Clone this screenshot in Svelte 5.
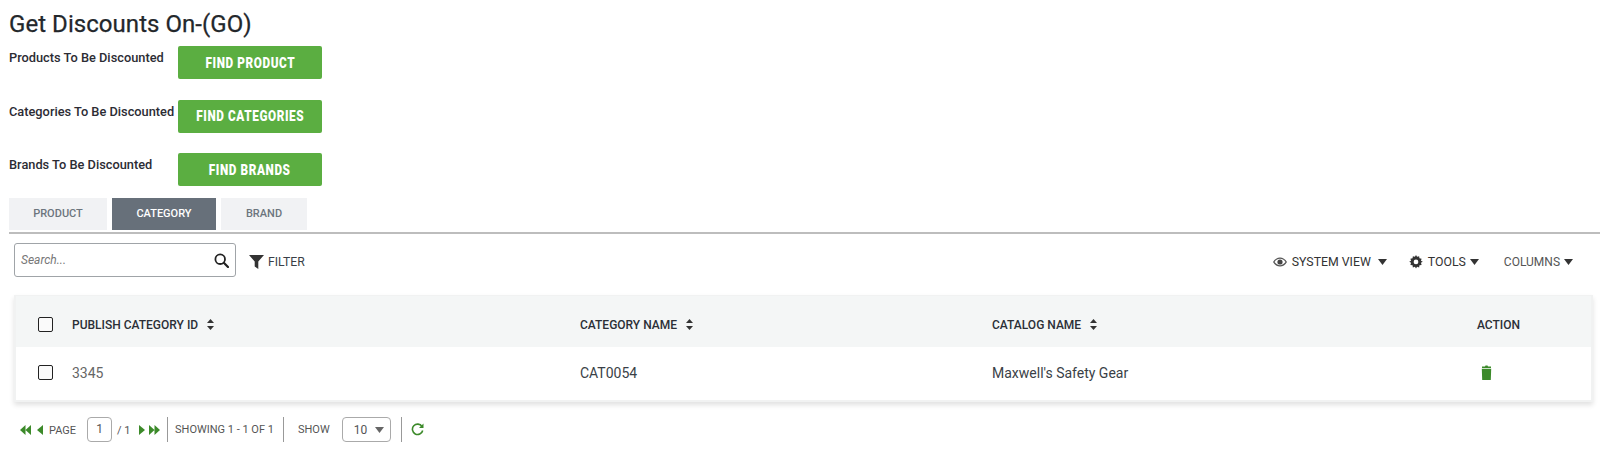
<script>
  const finders = [
    { label: "Products To Be Discounted", action: "FIND PRODUCT" },
    { label: "Categories To Be Discounted", action: "FIND CATEGORIES" },
    { label: "Brands To Be Discounted", action: "FIND BRANDS" }
  ];
  const tabs = ["PRODUCT", "CATEGORY", "BRAND"];
  const active = "CATEGORY";
</script>

{#snippet caret()}
  <svg class="caret" width="9" height="6" viewBox="0 0 9 6"><path d="M0 0h9L4.5 6z" fill="currentColor" /></svg>
{/snippet}

{#snippet sort()}
  <svg class="sort" width="7" height="11" viewBox="0 0 7 11"><path d="M3.500 0L7 4H0zM0 7h7l-3.500 4z" fill="#333" /></svg>
{/snippet}

{#snippet checkbox()}
  <span class="check"></span>
{/snippet}

<main class="page">
  <h1>Get Discounts On-(GO)</h1>

  <section class="finders">
    {#each finders as f}
      <div class="finder">
        <span class="finder-label">{f.label}</span>
        <button class="find"><span>{f.action}</span></button>
      </div>
    {/each}
  </section>

  <nav class="tabs">
    {#each tabs as t}
      <span class="tab" class:active={t === active}>{t}</span>
    {/each}
  </nav>

  <div class="toolbar">
    <div class="search">
      <span class="placeholder">Search...</span>
      <svg width="15" height="15" viewBox="0 0 15 15" fill="none" stroke="#222" stroke-width="1.8">
        <circle cx="6.200" cy="6.200" r="4.800" />
        <path d="M9.800 9.800l4.200 4.200" stroke-width="2.200" stroke-linecap="round" />
      </svg>
    </div>
    <span class="filter">
      <svg width="15" height="14" viewBox="0 0 15 14"><path d="M0 0h15L9.300 6.600V14L5.700 11.500V6.600z" fill="#333" /></svg>
      FILTER
    </span>
    <div class="tools">
      <span class="tool view">
        <svg width="14" height="10" viewBox="0 0 14 10">
          <path d="M0 5c1.800-3 4.200-4.500 7-4.500S12.200 2 14 5c-1.800 3-4.200 4.500-7 4.500S1.800 8 0 5z" fill="#555" />
          <path d="M1.500 5C3 3 4.800 1.800 7 1.800S11 3 12.500 5C11 7 9.200 8.200 7 8.200S3 7 1.500 5z" fill="#fff" />
          <circle cx="7" cy="5" r="2.600" fill="#444" />
        </svg>
        SYSTEM VIEW
        {@render caret()}
      </span>
      <span class="tool gear">
        <svg width="14" height="14" viewBox="0 0 13 13">
          <path d="M6.500 0l1 1.700 1.900-.6.300 2 2 .3-.6 1.900 1.700 1-1.700 1 .6 1.900-2 .3-.3 2-1.900-.6-1 1.700-1-1.700-1.900.6-.3-2-2-.3.6-1.900L.2 6.300l1.700-1-.6-1.900 2-.3.3-2 1.900.6z" fill="#333" />
          <circle cx="6.500" cy="6.400" r="2.200" fill="#fff" />
        </svg>
        TOOLS
        {@render caret()}
      </span>
      <span class="tool columns">COLUMNS {@render caret()}</span>
    </div>
  </div>

  <section class="card">
    <div class="row head">
      <span class="c-check">{@render checkbox()}</span>
      <span class="c-id">PUBLISH CATEGORY ID {@render sort()}</span>
      <span class="c-name">CATEGORY NAME {@render sort()}</span>
      <span class="c-catalog">CATALOG NAME {@render sort()}</span>
      <span class="c-action">ACTION</span>
    </div>
    <div class="row body">
      <span class="c-check">{@render checkbox()}</span>
      <span class="c-id muted">3345</span>
      <span class="c-name">CAT0054</span>
      <span class="c-catalog">Maxwell's Safety Gear</span>
      <span class="c-action">
        <svg class="trash" width="11" height="15" viewBox="0 0 11 15">
          <path d="M1 1.500h3L4.500 .5h2l.5 1h3V3H1zM.8 3.800h9.400L9.800 15H1.200z" fill="#3c8a2a" />
        </svg>
      </span>
    </div>
  </section>

  <footer class="pager">
    <svg width="11" height="10" viewBox="0 0 11 10"><path d="M5.500 0v10L0 5zM11 0v10L5.500 5z" fill="#3c8a2a" /></svg>
    <svg class="prev" width="6" height="10" viewBox="0 0 6 10"><path d="M6 0v10L0 5z" fill="#3c8a2a" /></svg>
    <span class="page-word">PAGE</span>
    <span class="page-input">1</span>
    <span class="page-total">/ 1</span>
    <svg class="next" width="6" height="10" viewBox="0 0 6 10"><path d="M0 0v10l6-5z" fill="#3c8a2a" /></svg>
    <svg class="last" width="11" height="10" viewBox="0 0 11 10"><path d="M0 0v10l5.500-5zM5.500 0v10L11 5z" fill="#3c8a2a" /></svg>
    <span class="sep"></span>
    <span class="showing">SHOWING 1 - 1 OF 1</span>
    <span class="sep"></span>
    <span class="show">SHOW</span>
    <span class="select">10 <svg width="9" height="6" viewBox="0 0 9 6"><path d="M0 0h9L4.500 6z" fill="#666" /></svg></span>
    <span class="sep"></span>
    <svg class="refresh" width="13" height="13" viewBox="0 0 13 13" fill="none">
      <path d="M11 3.500A5.200 5.200 0 1 0 11.700 7.500" stroke="#3c8a2a" stroke-width="1.600" />
      <path d="M12.500 .5v4.500H8z" fill="#3c8a2a" />
    </svg>
  </footer>
</main>

<style>
  :global(body) {
    margin: 0;
    background: #fff;
    font-family: Roboto, "Liberation Sans", sans-serif;
  }
  .page {
    width: 1600px;
    height: 450px;
    overflow: hidden;
    color: #333;
  }
  h1 {
    margin: 0;
    padding: 10px 0 0 9px;
    height: 28px;
    font-size: 24px;
    line-height: 28px;
    font-weight: 400;
    color: #23272b;
    letter-spacing: 0.05px;
    -webkit-text-stroke: 0.25px #23272b;
  }
  .finders {
    padding: 8px 0 0 9px;
    display: flex;
    flex-direction: column;
    gap: 20.5px;
  }
  .finder {
    display: flex;
    height: 33px;
  }
  .finder-label {
    width: 169px;
    font-size: 12.8px;
    line-height: 23px;
    font-weight: 500;
    color: #2c2c34;
    white-space: nowrap;
  }
  .find {
    width: 144px;
    height: 33px;
    border: none;
    border-radius: 2px;
    background: #5bae41;
    color: #fff;
    font: 900 14px/1 Roboto, sans-serif;
    letter-spacing: 0.7px;
    padding: 0;
  }
  .find span {
    display: inline-block;
    white-space: nowrap;
    transform: scaleX(0.84);
  }
  .tabs {
    display: flex;
    gap: 5px;
    margin: 12px 0 2px 9px;
  }
  .tab {
    height: 32px;
    background: #f1f2f4;
    color: #6c757d;
    font-size: 11px;
    font-weight: 500;
    line-height: 32px;
    text-align: center;
    width: 98px;
  }
  .tab:nth-child(2) { width: 104px; }
  .tab:nth-child(3) { width: 86px; }
  .tab.active {
    background: #67707a;
    color: #fff;
  }
  .toolbar {
    margin: 0 0 0 9px;
    padding: 9px 0 0 5px;
    border-top: 2px solid #bdbdbd;
    display: flex;
    align-items: center;
    height: 34px;
  }
  .search {
    box-sizing: border-box;
    width: 222px;
    height: 34px;
    border: 1px solid #a0a4a8;
    border-radius: 3px;
    display: flex;
    align-items: center;
    justify-content: space-between;
    padding: 0 6px;
  }
  .placeholder {
    font-size: 12px;
    font-style: italic;
    color: #777;
  }
  .filter {
    margin: 3px 0 0 13px;
    display: flex;
    align-items: center;
    gap: 4px;
    font-size: 12.2px;
    color: #3a3f47;
  }
  .tools {
    margin: 3px 0 0 auto;
    display: flex;
    align-items: center;
    padding-right: 27px;
    font-size: 12.3px;
    color: #333;
  }
  .tool {
    display: flex;
    align-items: center;
    gap: 5px;
  }
  .view .caret { margin-left: 2px; }
  .gear { margin-left: 22px; }
  .gear .caret { margin-left: -1px; }
  .columns { margin-left: 25px; color: #555; font-size: 12px; }
  .columns .caret { margin-left: -1px; color: #333; }
  .card {
    margin: 18px 7px 0 14px;
    border: 2px solid #f1f2f2;
    border-top-width: 1px;
    box-shadow: 0 3px 5px rgba(0, 0, 0, 0.12);
    box-sizing: border-box;
    height: 107px;
  }
  .row {
    display: grid;
    grid-template-columns: 56px 508px 412px 485px 1fr;
    align-items: center;
  }
  .head {
    box-sizing: border-box;
    height: 51px;
    padding-top: 6px;
    background: #f4f6f6;
    font-size: 12px;
    font-weight: 500;
    color: #2b2f36;
  }
  .body {
    box-sizing: border-box;
    height: 53px;
    padding-bottom: 2px;
    font-size: 14px;
    color: #3a3f47;
  }
  .muted { color: #666; }
  .c-check {
    padding-left: 22px;
    display: flex;
  }
  .check {
    width: 15px;
    height: 15px;
    border: 1.5px solid #222;
    border-radius: 2px;
    box-sizing: border-box;
    background: #fafafa;
  }
  .sort { margin-left: 6px; vertical-align: -1px; }
  .c-id, .c-name, .c-catalog, .c-action { white-space: nowrap; }
  .trash { margin-left: 4px; display: block; }
  .pager {
    margin: 15px 0 0 20px;
    display: flex;
    align-items: center;
    height: 25px;
    font-size: 11px;
    color: #555;
  }
  .prev { margin-left: 6px; }
  .page-word { margin-left: 6px; margin-top: 2px; }
  .page-input {
    box-sizing: border-box;
    width: 25px;
    height: 25px;
    margin-left: 11px;
    border: 1px solid #aaa;
    border-radius: 4px;
    text-align: center;
    line-height: 22px;
    font-size: 12px;
  }
  .page-total { margin-left: 5px; margin-top: 2px; font-size: 11px; }
  .next { margin-left: 8px; }
  .last { margin-left: 4.5px; }
  .sep {
    width: 1px;
    height: 25px;
    background: #999;
    margin-left: 7px;
  }
  .showing { margin-left: 7px; }
  .showing + .sep { margin-left: 9px; }
  .show { margin-left: 14px; }
  .select {
    box-sizing: border-box;
    width: 49px;
    height: 25px;
    margin-left: 12px;
    border: 1px solid #aaa;
    border-radius: 4px;
    display: flex;
    align-items: center;
    justify-content: space-between;
    padding: 0 6px 0 11px;
    font-size: 12px;
  }
  .select + .sep { margin-left: 10px; }
  .refresh { margin-left: 9px; }
</style>
